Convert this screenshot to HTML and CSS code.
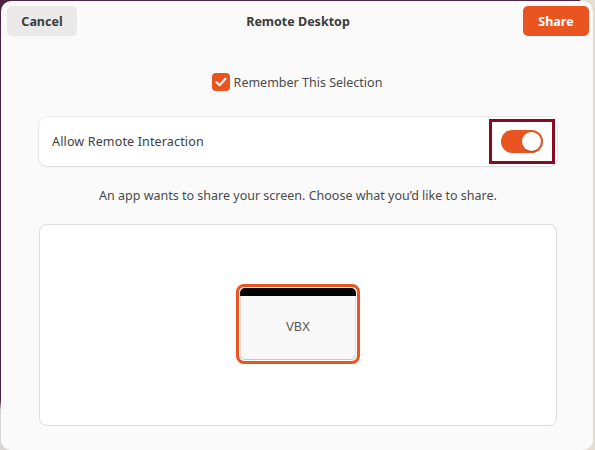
FILE: index.html
```html
<!DOCTYPE html>
<html>
<head>
<meta charset="utf-8">
<link rel="stylesheet" href="styles.css">
</head>
<body>
<div class="dialog">
  <header class="header">
    <button class="btn btn-cancel">Cancel</button>
    <h1 class="title">Remote Desktop</h1>
    <button class="btn btn-share">Share</button>
  </header>
  <main class="content">
    <label class="remember">
      <span class="check">
        <svg width="12" height="10" viewBox="0 0 12 10"><path d="M1.5 5.2 L4.6 8.2 L10.5 1.8" fill="none" stroke="#fff" stroke-width="2" stroke-linecap="round" stroke-linejoin="round"/></svg>
      </span>
      <span class="remember-label">Remember This Selection</span>
    </label>
    <div class="row-card">
      <span class="row-label">Allow Remote Interaction</span>
      <span class="highlight">
        <span class="switch"><span class="knob"></span></span>
      </span>
    </div>
    <p class="desc">An app wants to share your screen. Choose what you’d like to share.</p>
    <div class="sources">
      <div class="window-thumb">
        <div class="window-inner">
          <div class="window-bar"></div>
          <div class="window-body">VBX</div>
        </div>
      </div>
    </div>
  </main>
</div>
</body>
</html>
```
FILE: styles.css
```css
* { box-sizing: border-box; }
html, body { margin: 0; height: 100%; }
body {
  background:
    linear-gradient(to right, transparent 0, transparent 580px, #e4ddd2 580px),
    linear-gradient(to bottom, #4a2440 0, #4a2440 400px, #d8d6d4 410px);
  font-family: "Noto Sans", "DejaVu Sans", sans-serif;
  overflow: hidden;
}
.dialog {
  margin: 1px 2px 0 1px;
  height: 449px;
  background: #fafafa;
  border-radius: 10px;
  display: flex;
  flex-direction: column;
}
.header {
  display: grid;
  grid-template-columns: 1fr auto 1fr;
  align-items: center;
  padding: 5px 4px 0 6px;
}
.btn {
  font-family: inherit;
  font-weight: 700;
  font-size: 12.5px;
  height: 30px;
  border: none;
  border-radius: 5px;
  padding: 0;
}
.btn-cancel {
  justify-self: start;
  width: 70px;
  background: #e9e9e9;
  color: #3b3b3b;
}
.btn-share {
  justify-self: end;
  width: 66px;
  background: #e95420;
  color: #fff;
}
.title {
  margin: 0;
  font-size: 12.5px;
  font-weight: 700;
  color: #3b3b3b;
}
.content {
  display: flex;
  flex-direction: column;
  align-items: center;
  padding: 0 36px 0 38px;
}
.remember {
  margin-top: 37px;
  display: flex;
  align-items: center;
  gap: 4px;
  font-size: 12.5px;
  color: #4a4a4a;
  margin-left: -2px;
}
.check {
  width: 18px;
  height: 18px;
  border-radius: 4px;
  background: #e95420;
  display: flex;
  align-items: center;
  justify-content: center;
}
.row-card {
  margin-top: 26px;
  align-self: stretch;
  height: 49px;
  background: #fff;
  border-radius: 8px;
  box-shadow: 0 0 0 1px rgba(0,0,0,0.05), 0 1px 2px rgba(0,0,0,0.08);
  display: flex;
  align-items: center;
  justify-content: space-between;
  padding: 0 2px 0 13px;
  font-size: 12.5px;
  color: #3d3d3d;
}
.row-label { letter-spacing: 0.15px; }
.highlight {
  width: 66px;
  height: 45px;
  border: 3px solid #8a0a24;
  display: flex;
  align-items: center;
  justify-content: center;
}
.switch {
  width: 42px;
  height: 23px;
  border-radius: 12px;
  background: #e95420;
  display: flex;
  align-items: center;
  justify-content: flex-end;
  padding: 2px;
}
.knob {
  width: 19px;
  height: 19px;
  border-radius: 50%;
  background: #fff;
  box-shadow: 0 1px 1px rgba(0,0,0,0.2);
}
.desc {
  margin: 21px 0 0;
  font-size: 12.5px;
  color: #4a4a4a;
  line-height: 18px;
}
.sources {
  margin-top: 19px;
  align-self: stretch;
  height: 202px;
  background: #fff;
  border: 1px solid #dedede;
  border-radius: 8px;
  display: flex;
  align-items: center;
  justify-content: center;
}
.window-thumb {
  width: 124px;
  height: 80px;
  border: 3px solid #e95420;
  border-radius: 8px;
  padding: 1px;
  margin-top: -3px;
}
.window-inner {
  height: 100%;
  border-radius: 5px;
  overflow: hidden;
  background: #f8f8f8;
  box-shadow: inset 0 -1px 0 #c8c8c8, inset 1px 0 0 #ddd, inset -1px 0 0 #ddd;
  display: flex;
  flex-direction: column;
}
.window-bar {
  height: 8px;
  background: #000;
}
.window-body {
  flex: 1;
  display: flex;
  align-items: center;
  justify-content: center;
  font-family: "Liberation Sans", Arial, sans-serif;
  font-size: 12px;
  color: #555;
  padding-bottom: 2px;
}
```
